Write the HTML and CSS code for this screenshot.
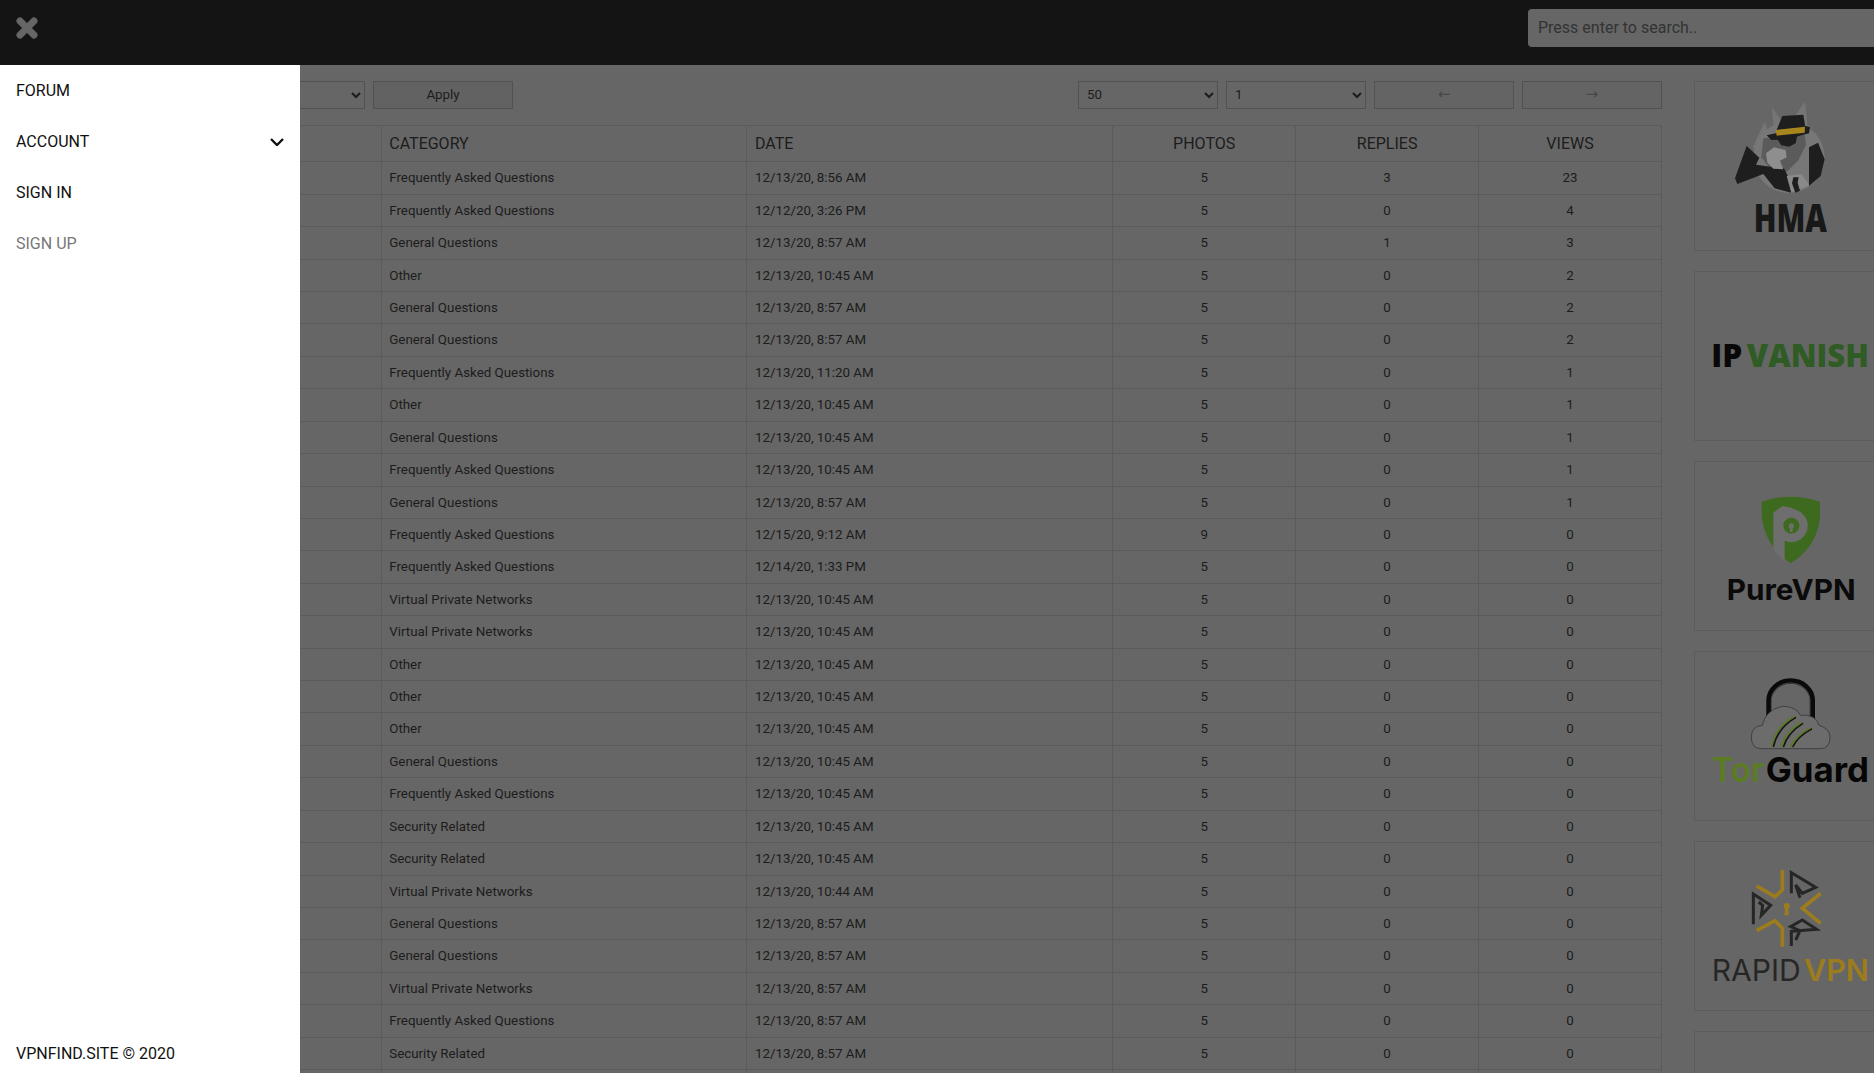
FILE: index.html
```html
<!DOCTYPE html>
<html lang="en">
<head>
<meta charset="utf-8">
<title>VPNFIND.SITE</title>
<link rel="stylesheet" href="styles.css">
</head>
<body>
<div class="page">
  <header class="topbar">
    <button class="close" aria-label="Close menu">
      <svg viewBox="0 0 24 24" width="24" height="24"><path d="M5 5 19 19M19 5 5 19"/></svg>
    </button>
    <input class="search" placeholder="Press enter to search..">
  </header>
  <main class="main">
    <section class="content">
      <div class="toolbar">
        <div class="group">
          <select class="field wide"><option></option></select>
          <button class="btn">Apply</button>
        </div>
        <div class="group">
          <select class="field"><option>50</option></select>
          <select class="field"><option>1</option></select>
          <button class="btn off">←</button>
          <button class="btn off">→</button>
        </div>
      </div>
      <table class="grid">
        <thead><tr><th></th><th>CATEGORY</th><th>DATE</th><th class="c">PHOTOS</th><th class="c">REPLIES</th><th class="c">VIEWS</th></tr></thead>
        <tbody>
          <tr><td></td><td>Frequently Asked Questions</td><td>12/13/20, 8:56 AM</td><td class="c">5</td><td class="c">3</td><td class="c">23</td></tr>
          <tr><td></td><td>Frequently Asked Questions</td><td>12/12/20, 3:26 PM</td><td class="c">5</td><td class="c">0</td><td class="c">4</td></tr>
          <tr><td></td><td>General Questions</td><td>12/13/20, 8:57 AM</td><td class="c">5</td><td class="c">1</td><td class="c">3</td></tr>
          <tr><td></td><td>Other</td><td>12/13/20, 10:45 AM</td><td class="c">5</td><td class="c">0</td><td class="c">2</td></tr>
          <tr><td></td><td>General Questions</td><td>12/13/20, 8:57 AM</td><td class="c">5</td><td class="c">0</td><td class="c">2</td></tr>
          <tr><td></td><td>General Questions</td><td>12/13/20, 8:57 AM</td><td class="c">5</td><td class="c">0</td><td class="c">2</td></tr>
          <tr><td></td><td>Frequently Asked Questions</td><td>12/13/20, 11:20 AM</td><td class="c">5</td><td class="c">0</td><td class="c">1</td></tr>
          <tr><td></td><td>Other</td><td>12/13/20, 10:45 AM</td><td class="c">5</td><td class="c">0</td><td class="c">1</td></tr>
          <tr><td></td><td>General Questions</td><td>12/13/20, 10:45 AM</td><td class="c">5</td><td class="c">0</td><td class="c">1</td></tr>
          <tr><td></td><td>Frequently Asked Questions</td><td>12/13/20, 10:45 AM</td><td class="c">5</td><td class="c">0</td><td class="c">1</td></tr>
          <tr><td></td><td>General Questions</td><td>12/13/20, 8:57 AM</td><td class="c">5</td><td class="c">0</td><td class="c">1</td></tr>
          <tr><td></td><td>Frequently Asked Questions</td><td>12/15/20, 9:12 AM</td><td class="c">9</td><td class="c">0</td><td class="c">0</td></tr>
          <tr><td></td><td>Frequently Asked Questions</td><td>12/14/20, 1:33 PM</td><td class="c">5</td><td class="c">0</td><td class="c">0</td></tr>
          <tr><td></td><td>Virtual Private Networks</td><td>12/13/20, 10:45 AM</td><td class="c">5</td><td class="c">0</td><td class="c">0</td></tr>
          <tr><td></td><td>Virtual Private Networks</td><td>12/13/20, 10:45 AM</td><td class="c">5</td><td class="c">0</td><td class="c">0</td></tr>
          <tr><td></td><td>Other</td><td>12/13/20, 10:45 AM</td><td class="c">5</td><td class="c">0</td><td class="c">0</td></tr>
          <tr><td></td><td>Other</td><td>12/13/20, 10:45 AM</td><td class="c">5</td><td class="c">0</td><td class="c">0</td></tr>
          <tr><td></td><td>Other</td><td>12/13/20, 10:45 AM</td><td class="c">5</td><td class="c">0</td><td class="c">0</td></tr>
          <tr><td></td><td>General Questions</td><td>12/13/20, 10:45 AM</td><td class="c">5</td><td class="c">0</td><td class="c">0</td></tr>
          <tr><td></td><td>Frequently Asked Questions</td><td>12/13/20, 10:45 AM</td><td class="c">5</td><td class="c">0</td><td class="c">0</td></tr>
          <tr><td></td><td>Security Related</td><td>12/13/20, 10:45 AM</td><td class="c">5</td><td class="c">0</td><td class="c">0</td></tr>
          <tr><td></td><td>Security Related</td><td>12/13/20, 10:45 AM</td><td class="c">5</td><td class="c">0</td><td class="c">0</td></tr>
          <tr><td></td><td>Virtual Private Networks</td><td>12/13/20, 10:44 AM</td><td class="c">5</td><td class="c">0</td><td class="c">0</td></tr>
          <tr><td></td><td>General Questions</td><td>12/13/20, 8:57 AM</td><td class="c">5</td><td class="c">0</td><td class="c">0</td></tr>
          <tr><td></td><td>General Questions</td><td>12/13/20, 8:57 AM</td><td class="c">5</td><td class="c">0</td><td class="c">0</td></tr>
          <tr><td></td><td>Virtual Private Networks</td><td>12/13/20, 8:57 AM</td><td class="c">5</td><td class="c">0</td><td class="c">0</td></tr>
          <tr><td></td><td>Frequently Asked Questions</td><td>12/13/20, 8:57 AM</td><td class="c">5</td><td class="c">0</td><td class="c">0</td></tr>
          <tr><td></td><td>Security Related</td><td>12/13/20, 8:57 AM</td><td class="c">5</td><td class="c">0</td><td class="c">0</td></tr>
          <tr><td></td><td>&nbsp;</td><td></td><td></td><td></td><td></td></tr>
        </tbody>
      </table>
    </section>
    <aside class="ads">
      <div class="ad">
        <svg class="logo" viewBox="63 36 576 501">
          <path class="d-ear" d="M236 232 272 155 290 205 260 262ZM293 110 322 152 300 185ZM352 152 393 95 402 178Z"/>
          <circle class="d-disc" cx="345" cy="262" r="107"/>
          <path class="d-head" d="M268 205 392 195 396 225 372 272 338 305 292 300 262 262Z"/>
          <path class="d-suit" d="M183 325 218 228 256 263 246 284 300 292 330 295 345 325 352 368 302 355 268 312 190 342ZM405 348 405 232 432 218 452 268 440 318Z"/>
          <path class="d-shirt" d="M338 318 382 312 406 346 352 368Z"/>
          <path class="d-suit" d="M358 322 374 322 371 338 378 362 364 368 354 340Z"/>
          <path class="d-snout" d="M276 250 300 232 335 240 338 262 318 272 328 298 298 296 280 278Z"/>
          <path class="d-suit" d="M308 180 325 138 388 134 394 172ZM278 196 395 168 408 172 405 190 340 208 292 210Z"/>
          <path class="d-suit" d="M310 208 370 196 365 220 345 230 322 226Z"/>
          <path class="d-gold" d="M305 180 393 170 392 188 308 197Z"/>
          <text class="t-hma" x="239" y="485" textLength="220" lengthAdjust="spacingAndGlyphs">HMA</text>
        </svg>
      </div>
      <div class="ad">
        <svg class="logo" viewBox="63 36 576 501">
          <text class="t-ip" x="112" y="321" textLength="93" lengthAdjust="spacingAndGlyphs">IP</text>
          <text class="t-vanish" x="218" y="321" textLength="367" lengthAdjust="spacingAndGlyphs">VANISH</text>
        </svg>
      </div>
      <div class="ad">
        <svg class="logo" viewBox="63 36 576 501">
          <path class="pv-shield" d="M263 155Q350 125 438 155L438 200Q430 290 350 340Q275 290 263 200Z"/>
          <path class="pv-p" d="M298 188 325 168Q352 172 372 182A46 46 0 0 1 332 272L332 332Q312 318 298 298Z"/>
          <circle class="pv-shield" cx="352" cy="227" r="24"/>
          <circle class="pv-p" cx="352" cy="228" r="8"/>
          <rect class="pv-p" x="348" y="230" width="8" height="16"/>
          <text class="t-pure" x="158" y="449" textLength="387" lengthAdjust="spacingAndGlyphs">PureVPN</text>
        </svg>
      </div>
      <div class="ad">
        <svg class="logo" viewBox="63 36 576 501">
          <g transform="translate(0 -569)">
            <path class="tg-shackle" d="M285 810V750A65 58 0 0 1 415 750V810"/>
            <path class="tg-gap" d="M292 800V750A58 52 0 0 1 408 750V800"/>
            <path class="tg-cloud" d="M262 895Q232 895 232 860Q232 828 265 825Q275 778 325 768Q365 768 380 795Q425 790 435 825Q468 835 468 860Q468 895 438 895Z"/>
            <path class="tg-arc-b" d="M298 890Q311 832 366 801M328 890Q341 847 387 819M356 890Q371 857 414 835"/>
            <path class="tg-arc-g" d="M292 890Q305 830 362 798M322 890Q335 845 383 816M350 890Q365 855 410 832"/>
            <text class="t-tor" x="113" y="995" textLength="157" lengthAdjust="spacingAndGlyphs">Tor</text>
            <text class="t-guard" x="275" y="995" textLength="310" lengthAdjust="spacingAndGlyphs">Guard</text>
          </g>
        </svg>
      </div>
      <div class="ad">
        <svg class="logo" viewBox="63 36 576 501">
          <path class="rv-gold" d="M248 168 303 200 325 180V120M440 190 385 235 440 280M248 302 303 272 325 295V350"/>
          <path class="rv-dark" d="M352 190V128L425 172 385 190 365 165 378 203M238 283V192L290 226 262 256 266 226 254 216M352 348V304L428 298 385 270 350 290 378 302 365 330"/>
          <circle class="rv-key" cx="338" cy="228" r="9"/>
          <path class="rv-key" d="M334 230H342L345 256H331Z"/>
          <text class="t-rapid" x="113" y="452" textLength="267" lengthAdjust="spacingAndGlyphs">RAPID</text>
          <text class="t-rvpn" x="390" y="452" textLength="195" lengthAdjust="spacingAndGlyphs">VPN</text>
        </svg>
      </div>
      <div class="ad"></div>
    </aside>
  </main>
</div>
<nav class="drawer">
  <a class="item">FORUM</a>
  <a class="item">ACCOUNT
    <svg class="chev" viewBox="0 0 14 8" width="14" height="8"><path d="M1 1 7 7 13 1"/></svg>
  </a>
  <a class="item">SIGN IN</a>
  <a class="item muted">SIGN UP</a>
  <div class="foot">VPNFIND.SITE © 2020</div>
</nav>
</body>
</html>
```

FILE: styles.css
```css
html, body {
  margin: 0;
  height: 100%;
  overflow: hidden;
  background: #666;
}
body {
  font-family: Roboto, "Liberation Sans", sans-serif;
  position: relative;
  color: #111;
}
.page {
  width: 1928px;
  height: 1073px;
  overflow: hidden;
}
.topbar {
  height: 65px;
  background: #141414;
  display: flex;
  justify-content: space-between;
  align-items: flex-start;
}
.close {
  margin: 16px 0 0 15px;
  padding: 0;
  width: 24px;
  height: 24px;
  border: 0;
  background: none;
  display: block;
}
.close svg {
  display: block;
}
.close path {
  fill: none;
  stroke: #666;
  stroke-width: 7;
  stroke-linecap: round;
}
.search {
  box-sizing: border-box;
  width: 400px;
  height: 38px;
  margin-top: 9px;
  padding: 0 10px 2px;
  border: 0;
  border-radius: 4px;
  background: #666;
  font: 16px Roboto, sans-serif;
}
.search::placeholder {
  color: #333;
  opacity: 1;
}
.main {
  display: flex;
  padding: 16px 0 0 15px;
  gap: 32px;
}
.content {
  width: 1647px;
  flex: none;
}
.toolbar {
  display: flex;
  justify-content: space-between;
  margin-bottom: 16px;
}
.group {
  display: flex;
  gap: 8px;
}
.field, .btn {
  box-sizing: border-box;
  width: 140px;
  height: 28px;
  border: 1px solid #525252;
  background: #666;
  color: #1c1c1c;
  font: 13.33px Roboto, sans-serif;
  border-radius: 0;
  padding: 0 0 2px;
}
.field {
  padding-left: 4px;
}
.field.wide {
  width: 350px;
}
.btn {
  background: #626262;
}
.btn.off {
  background: #646464;
  color: #484848;
  font-family: "DejaVu Sans", sans-serif;
  font-size: 15px;
}
.grid {
  width: 1647px;
  table-layout: fixed;
  border-collapse: collapse;
  font-size: 13.33px;
}
.grid th:nth-child(-n+3) {
  box-sizing: border-box;
  width: 22.22%;
}
.grid th, .grid td {
  border: 1px solid #595b5c;
  padding: 6px 7.5px;
  line-height: 19.42px;
  text-align: left;
  color: #1c1c1c;
}
.grid th {
  font-weight: 400;
  font-size: 16px;
  line-height: 23.3px;
}
.grid .c {
  text-align: center;
}
.ads {
  display: flex;
  flex-direction: column;
  gap: 20px;
  flex: none;
  width: 194px;
}
.ad {
  box-sizing: border-box;
  height: 170px;
  border: 1px solid #5c5c5c;
}
.logo {
  display: block;
  width: 192px;
  height: 167px;
}
.logo text {
  font-family: "Open Sans", sans-serif;
}
.logo .t-hma {
  font-size: 114px;
  font-weight: 800;
  fill: #181818;
}
.logo .t-ip {
  font-size: 95px;
  font-weight: 800;
  fill: #080808;
}
.logo .t-vanish {
  font-size: 95px;
  font-weight: 800;
  fill: #2f5c24;
}
.logo .t-pure {
  font-family: Inter, sans-serif;
  font-size: 85px;
  font-weight: 700;
  fill: #0a0a0a;
}
.logo .t-tor {
  font-family: Inter, sans-serif;
  font-size: 103px;
  font-weight: 600;
  fill: #5c7c24;
}
.logo .t-guard {
  font-family: Inter, sans-serif;
  font-size: 103px;
  font-weight: 700;
  fill: #060606;
}
.logo .t-rapid {
  font-family: Inter, sans-serif;
  font-size: 88px;
  font-weight: 400;
  fill: #262626;
}
.logo .t-rvpn {
  font-family: Inter, sans-serif;
  font-size: 88px;
  font-weight: 600;
  fill: #9c7c1c;
}
.d-ear { fill: #757575; }
.d-disc { fill: #777; }
.d-head { fill: #5b5b5b; }
.d-suit { fill: #1e1e1e; }
.d-shirt { fill: #8a8a8a; }
.d-snout { fill: #8e8e8e; }
.d-gold { fill: #a8861e; }
.pv-shield { fill: #3d6a1e; }
.pv-p { fill: #6e6e6e; }
.tg-shackle {
  fill: none;
  stroke: #0a0a0a;
  stroke-width: 16;
}
.tg-gap {
  fill: none;
  stroke: #666;
  stroke-width: 2;
}
.tg-cloud {
  fill: #6c6c6c;
  stroke: #2c2c2c;
  stroke-width: 2;
}
.tg-arc-b, .tg-arc-g {
  fill: none;
  stroke-width: 5;
}
.tg-arc-b { stroke: #161616; }
.tg-arc-g { stroke: #5a7a22; }
.rv-gold {
  fill: none;
  stroke: #9c7c1c;
  stroke-width: 11;
}
.rv-dark {
  fill: none;
  stroke: #262626;
  stroke-width: 9;
}
.rv-key { fill: #9c7c1c; }
.drawer {
  position: absolute;
  top: 65px;
  left: 0;
  bottom: 0;
  width: 300px;
  background: #fff;
  display: flex;
  flex-direction: column;
  font-size: 16px;
  line-height: 24px;
  color: #111;
}
.item {
  display: flex;
  justify-content: space-between;
  align-items: center;
  height: 51px;
  padding: 0 16px;
}
.item.muted {
  color: #777;
}
.chev path {
  fill: none;
  stroke: #111;
  stroke-width: 2.4;
}
.foot {
  margin-top: auto;
  padding: 0 16px 7px;
}
```
